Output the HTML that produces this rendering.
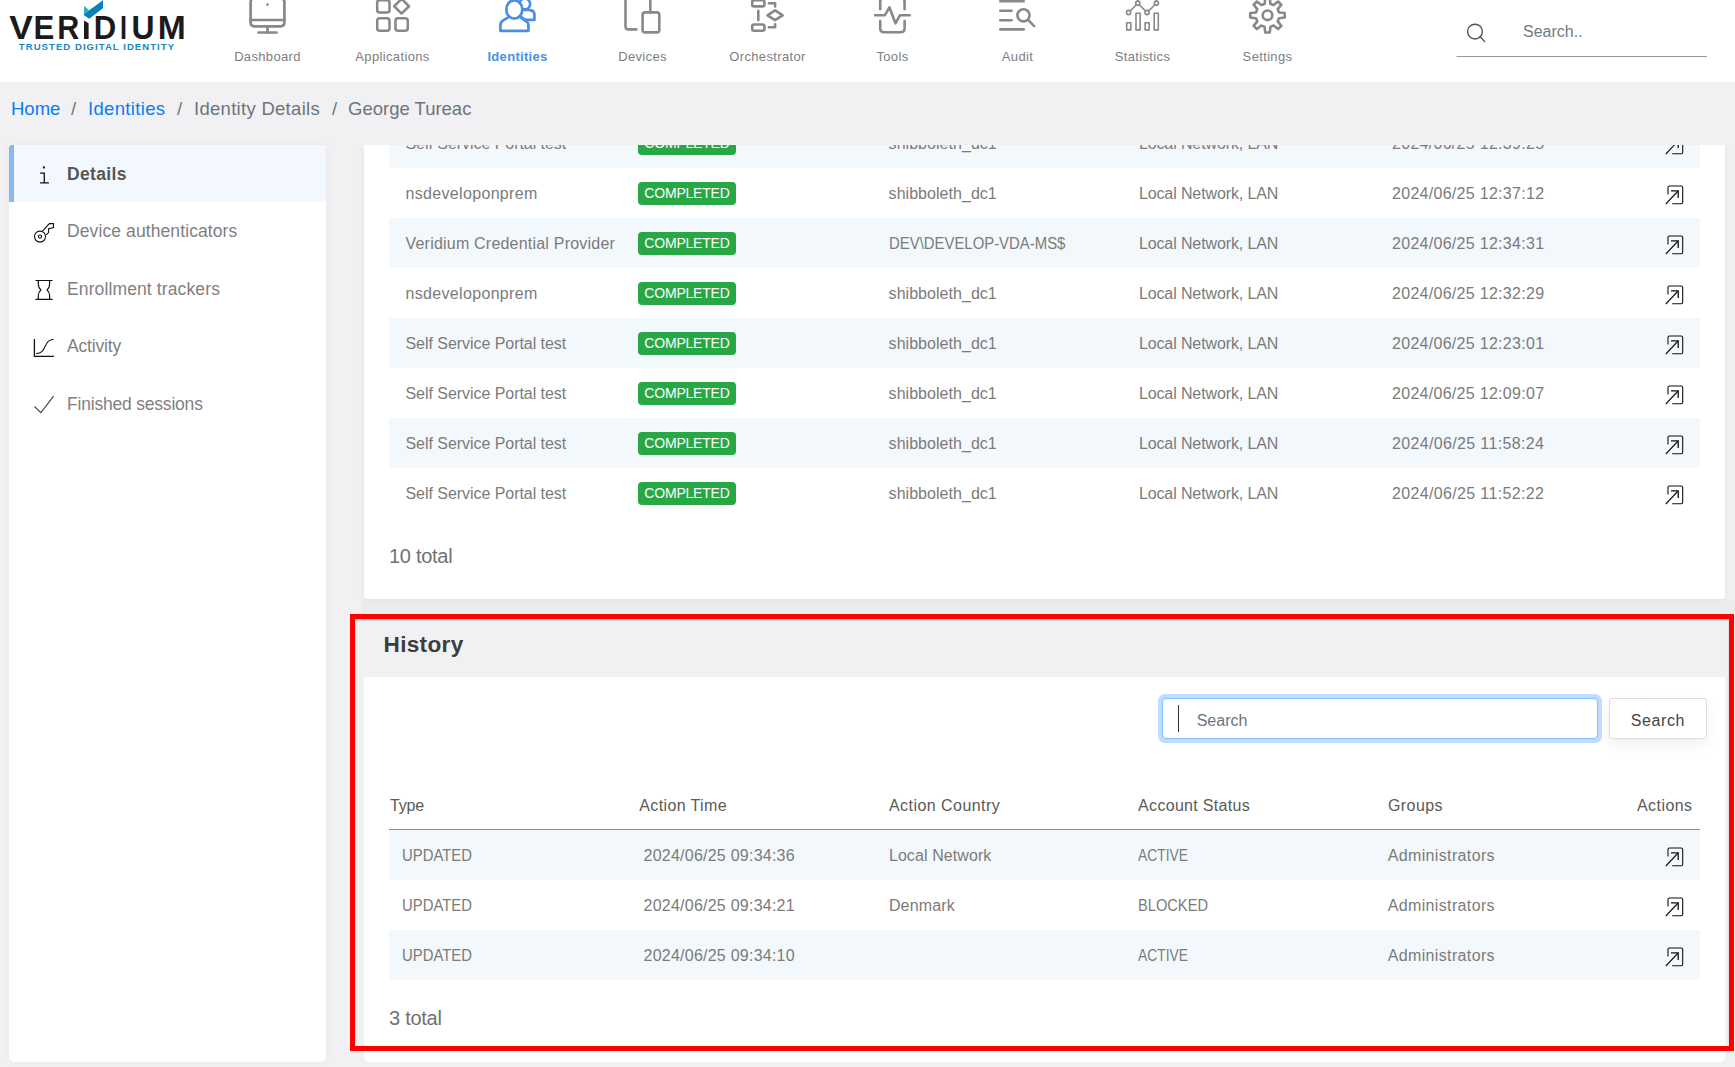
<!DOCTYPE html>
<html><head><meta charset="utf-8">
<style>
*{box-sizing:border-box;margin:0;padding:0}
html,body{width:1735px;height:1067px;overflow:hidden}
body{background:#f1f1f3;font-family:"Liberation Sans",sans-serif;position:relative;color:#707070}
.a{position:absolute;white-space:nowrap;line-height:1}
#hdr{position:absolute;left:0;top:0;width:1735px;height:82px;background:#fff}
.nl{position:absolute;top:50px;width:125px;text-align:center;font-size:13px;color:#7e7e7e;letter-spacing:0.35px;line-height:1}
.nl.act{color:#4a90e2;font-weight:bold;letter-spacing:0.3px}
#side{position:absolute;left:9px;top:145px;width:317px;height:917px;background:#fff;border-radius:0 0 5px 5px;box-shadow:0 0 8px rgba(0,0,0,0.04)}
.si{position:absolute;left:58px;font-size:17.5px;color:#7f7f7f;line-height:1}
#card1{position:absolute;left:364px;top:145px;width:1361px;height:454px;background:#fff;border-radius:0 0 4px 4px;box-shadow:0 1px 7px rgba(0,0,0,0.06)}
#card2{position:absolute;left:364px;top:677px;width:1361px;height:385px;background:#fff;border-radius:0 0 5px 5px}
.stripe{position:absolute;left:389px;width:1311px;height:50px;background:#f3f8fc}
.t{position:absolute;font-size:16px;line-height:1;white-space:nowrap;color:#6e6e6e}
.badge{position:absolute;left:638px;width:98px;height:23px;background:#28a745;border-radius:4px;color:#fff;font-size:14px;line-height:23px;text-align:center;letter-spacing:-0.2px}
.th{position:absolute;top:797.5px;font-size:16px;line-height:1;color:#555;white-space:nowrap}
</style></head><body>

<div id="hdr"></div>

<!-- logo -->
<svg class="a" style="left:0;top:0" width="200" height="60" viewBox="0 0 200 60">
  <g fill="#1c1a1b" font-family="Liberation Sans" font-weight="bold" font-size="34">
    <text x="9.2" y="38.9" textLength="23.5" lengthAdjust="spacingAndGlyphs">V</text>
    <text x="33.6" y="38.9" textLength="20.8" lengthAdjust="spacingAndGlyphs">E</text>
    <text x="57.2" y="38.9" textLength="22" lengthAdjust="spacingAndGlyphs">R</text>
    <text x="93.8" y="38.9" textLength="22.5" lengthAdjust="spacingAndGlyphs">D</text>
    <text x="120" y="38.9" textLength="7" lengthAdjust="spacingAndGlyphs">I</text>
    <text x="131.5" y="38.9" textLength="23" lengthAdjust="spacingAndGlyphs">U</text>
    <text x="157.7" y="38.9" textLength="28" lengthAdjust="spacingAndGlyphs">M</text>
  </g>
  <polygon fill="#1c1a1b" points="84,20.5 88.6,23.3 88.6,38.9 84,38.9"/>
  <polygon fill="#2bb0c4" points="84,5.8 89,10.2 84,14"/>
  <polygon fill="#0b80b9" points="84,14 103,0.3 103,8.2 89.2,18.7 84,15.2"/>
  <text x="18.8" y="49.8" fill="#1787c2" font-family="Liberation Sans" font-weight="bold" font-size="9.6" textLength="155.3" lengthAdjust="spacing">TRUSTED DIGITAL IDENTITY</text>
</svg>

<!-- nav icons -->
<svg class="a" style="left:0;top:0" width="1735" height="82" viewBox="0 0 1735 82" fill="none" stroke-linecap="round" stroke-linejoin="round">
  <g stroke="#888" stroke-width="2.7">
    <!-- dashboard monitor -->
    <path d="M254.4,-1.6 H280.6 Q284.4,-1.6 284.4,2.2 V22.5 Q284.4,26.3 280.6,26.3 H254.4 Q250.6,26.3 250.6,22.5 V2.2 Q250.6,-1.6 254.4,-1.6 Z"/>
    <path d="M250.6,20 H284.4"/>
    <path d="M258.5,32.5 H276.5" />
    <path d="M267.5,26.3 V32.5"/>
  </g>
  <circle cx="267.5" cy="4.6" r="1.3" fill="#888"/>
  <g stroke="#888" stroke-width="2.5">
    <rect x="377.2" y="0.15" width="12.3" height="12.3" rx="2.5"/>
    <rect x="377.2" y="18.35" width="12.3" height="12.3" rx="2.5"/>
    <rect x="395.45" y="18.35" width="12.3" height="12.3" rx="2.5"/>
    <path d="M401.6,-1.2 L409,6.25 L401.6,13.7 L394.2,6.25 Z"/>
  </g>
  <g stroke="#4a90e2" stroke-width="2.7">
    <circle cx="524.8" cy="4" r="5.3" fill="#fff"/>
    <path d="M521.5,17.2 Q523.8,19.9 527,19.9 H534.4 V14.6 Q534.4,11.5 531.2,10.4 Q530,10 528.3,10 H523.2" fill="#fff"/>
    <ellipse cx="514.3" cy="9.5" rx="8" ry="9.2" fill="#fff"/>
    <path d="M507.5,17.8 L503.5,20.2 Q500.4,22 500.4,25.2 V30.8 H528.4 V24.5 Q528.4,22.8 526.5,21.6 L521.2,17.8"/>
  </g>
  <g stroke="#868b8f" stroke-width="2.6">
    <path d="M625.5,-4 V26.5 Q625.5,29.4 628.4,29.4 H636.4"/>
    <rect x="642.6" y="12.4" width="16.7" height="20" rx="2.5"/>
    <path d="M650.3,-4 V12.4"/>
  </g>
  <g stroke="#888" stroke-width="2.6">
    <rect x="752.2" y="0.2" width="12.3" height="6.2" rx="2"/>
    <rect x="752.2" y="24.5" width="12.3" height="6.3" rx="2"/>
    <path d="M758.3,10.8 V20.1"/>
    <path d="M775.1,10.4 L782.7,15.3 L775.1,20.2 L767.5,15.3 Z"/>
    <path d="M768.9,3.2 H775.1 V6.4"/>
    <path d="M775.1,24.2 V27.3 H768.9"/>
  </g>
  <g stroke="#888" stroke-width="2.6">
    <path d="M880.2,9.3 V2 Q880.2,-2 884,-3"/>
    <path d="M904.6,9.3 V2 Q904.6,-2 900.8,-3"/>
    <path d="M880.2,21 V28.3 Q880.2,32.2 884.2,32.2 H900.6 Q904.6,32.2 904.6,28.3 V21"/>
    <path d="M875.1,15.3 H884.8 L889.4,7.3 L895.5,23.4 L899.9,15.3 H909.6"/>
  </g>
  <g stroke="#888" stroke-width="2.6">
    <path d="M1000.3,1.2 H1023.7"/>
    <path d="M1000.3,10.7 H1011.6"/>
    <path d="M1000.3,20.2 H1011.6"/>
    <path d="M1000.3,29.4 H1023.7"/>
    <circle cx="1023.5" cy="15.3" r="6.1"/>
    <path d="M1028.8,20.7 L1034.2,26.1"/>
  </g>
  <g stroke="#888" stroke-width="1.6">
    <rect x="1126.7" y="22.8" width="4.1" height="7.1"/>
    <rect x="1136" y="13.3" width="4.1" height="16.6"/>
    <rect x="1145.1" y="22.8" width="4.1" height="7.1"/>
    <rect x="1154.2" y="13.3" width="4.1" height="16.6"/>
    <circle cx="1128.6" cy="12.5" r="2.1"/>
    <circle cx="1137.8" cy="3.2" r="2.1"/>
    <circle cx="1147.1" cy="12.5" r="2.1"/>
    <circle cx="1156.4" cy="3.2" r="2.1"/>
    <path d="M1130.1,11 L1136.3,4.7 M1139.3,4.7 L1145.6,11 M1148.6,11 L1154.9,4.7 M1137.8,1.1 V-3 M1156.4,1.1 V-3"/>
  </g>
  <g stroke="#888" stroke-width="2.6">
    <path d="M1263.02,4.49 L1264.62,3.75 L1265.23,-1.95 L1269.77,-1.95 L1270.38,3.75 L1271.98,4.49 L1273.63,5.10 L1278.09,1.50 L1281.30,4.71 L1277.70,9.17 L1278.31,10.82 L1279.05,12.42 L1284.75,13.03 L1284.75,17.57 L1279.05,18.18 L1278.31,19.78 L1277.70,21.43 L1281.30,25.89 L1278.09,29.10 L1273.63,25.50 L1271.98,26.11 L1270.38,26.85 L1269.77,32.55 L1265.23,32.55 L1264.62,26.85 L1263.02,26.11 L1261.37,25.50 L1256.91,29.10 L1253.70,25.89 L1257.30,21.43 L1256.69,19.78 L1255.95,18.18 L1250.25,17.57 L1250.25,13.03 L1255.95,12.42 L1256.69,10.82 L1257.30,9.17 L1253.70,4.71 L1256.91,1.50 L1261.37,5.10 Z"/>
    <circle cx="1267.5" cy="15.3" r="4.8"/>
  </g>
  <!-- header search -->
  <g stroke="#555" stroke-width="1.4">
    <circle cx="1475" cy="31.6" r="7.4"/>
    <path d="M1480,36.6 L1484.6,41.4"/>
  </g>
  <path d="M1457,56.5 H1706.5" stroke="#8e9c9c" stroke-width="1.2"/>
</svg>

<div class="nl" style="left:205px">Dashboard</div>
<div class="nl" style="left:330px">Applications</div>
<div class="nl act" style="left:455px">Identities</div>
<div class="nl" style="left:580px">Devices</div>
<div class="nl" style="left:705px">Orchestrator</div>
<div class="nl" style="left:830px">Tools</div>
<div class="nl" style="left:955px">Audit</div>
<div class="nl" style="left:1080px">Statistics</div>
<div class="nl" style="left:1205px">Settings</div>
<div class="a" style="left:1523px;top:24.3px;font-size:16px;color:#6c7a89">Search..</div>

<!-- breadcrumb -->
<div class="a" style="left:11px;top:100.2px;font-size:18.5px;color:#0a7cf0">Home</div>
<div class="a" style="left:71px;top:100.2px;font-size:18.5px;color:#6c757d">/</div>
<div class="a" style="left:88px;top:100.2px;font-size:18.5px;color:#0a7cf0;letter-spacing:0.34px">Identities</div>
<div class="a" style="left:177px;top:100.2px;font-size:18.5px;color:#6c757d">/</div>
<div class="a" style="left:194px;top:100.2px;font-size:18.5px;color:#6c757d;letter-spacing:0.29px">Identity Details</div>
<div class="a" style="left:332px;top:100.2px;font-size:18.5px;color:#6c757d">/</div>
<div class="a" style="left:348px;top:100.2px;font-size:18.5px;color:#6c757d">George Tureac</div>

<!-- sidebar -->
<div id="side">
  <div style="position:absolute;left:0;top:0;width:317px;height:57px;background:#f2f8fd"></div>
  <div style="position:absolute;left:0;top:0;width:5px;height:57px;background:#8ab8eb;border-radius:3px 0 0 0"></div>
</div>
<svg class="a" style="left:0;top:140px" width="70" height="290" viewBox="0 140 70 290" fill="none" stroke="#111" stroke-width="1.1" stroke-linecap="butt" stroke-linejoin="miter">
  <rect x="42.9" y="166.4" width="2" height="2" fill="#111" stroke="none"/>
  <path d="M40.1,173.2 H44.3 V183 M40.1,182.9 H48.9" stroke-width="1.3"/>
  <circle cx="40" cy="236.6" r="5.5"/>
  <circle cx="40" cy="236.6" r="1.6"/>
  <path d="M42.2,231.3 L49.4,223.6 H53.5 V227.6 L48.6,228.6 V232.6 L46,234.9"/>
  <path d="M35.5,280.5 H52.6 M35.5,299.4 H52.6 M38.3,280.5 V284.2 Q38.3,287.5 40.9,289.9 Q38.3,292.5 38.3,295.5 V299.4 M49.6,280.5 V284.2 Q49.6,287.5 47.1,289.9 Q49.6,292.5 49.6,295.5 V299.4" stroke-width="1.2"/>
  <path d="M34.4,339 V356.4 H53.9" stroke-width="1.3"/>
  <path d="M36.2,353.6 C44,353.6 44,347 47,343 C49,340 51,339.5 53.6,339.5"/>
  <path d="M34.4,406.5 L40.9,412.6 L53.6,396.2" stroke="#444"/>
</svg>
<div class="si" style="left:67px;top:165.7px;font-weight:bold;color:#555;letter-spacing:0.35px">Details</div>
<div class="si" style="left:67px;top:223.3px;letter-spacing:0.1px">Device authenticators</div>
<div class="si" style="left:67px;top:280.9px;letter-spacing:0.12px">Enrollment trackers</div>
<div class="si" style="left:67px;top:338.4px;letter-spacing:-0.18px">Activity</div>
<div class="si" style="left:67px;top:396px;letter-spacing:-0.2px">Finished sessions</div>

<!-- card 1 -->
<div style="position:absolute;left:340px;top:145px;width:1395px;height:470px;overflow:hidden"><div id="card1" style="left:24px;top:0"></div></div>
<div style="position:absolute;left:362px;top:599px;width:1373px;height:16px;background:linear-gradient(rgba(0,0,0,0.015),rgba(0,0,0,0.028))"></div>
<div id="card2"></div>
<div id="clip1" style="position:absolute;left:0;top:145px;width:1735px;height:460px;overflow:hidden">
<div style="position:absolute;left:0;top:-145px;width:1735px;height:700px">
<div class="stripe" style="top:118px"></div>
<div class="a" style="left:405.5px;top:135.66px;font-size:16px;color:#7b7b7b;letter-spacing:-0.05px;">Self Service Portal test</div>
<div class="badge" style="top:132px">COMPLETED</div>
<div class="a" style="left:888.6px;top:135.66px;font-size:16px;color:#7b7b7b;letter-spacing:0.04px;">shibboleth_dc1</div>
<div class="a" style="left:1138.9px;top:135.66px;font-size:16px;color:#7b7b7b;letter-spacing:-0.11px;">Local Network, LAN</div>
<div class="a" style="left:1392px;top:135.66px;font-size:16px;color:#7b7b7b;letter-spacing:0.29px;">2024/06/25 12:39:25</div>
<svg class="a" style="left:1664.7px;top:132.5px" width="26" height="26" viewBox="1664.7 132.5 26 26" fill="none" stroke="#111" stroke-width="1.1"><path d="M1667.7,143.9 V137.0 Q1667.7,135.5 1669.2,135.5 H1680.9 Q1682.4,135.5 1682.4,137.0 V151.8 Q1682.4,153.3 1680.9,153.3 H1671.9"/><path d="M1665.5,153.5 L1677.8,140.5"/><path d="M1670.7,140.3 H1677.9 V147.5" stroke-width="1.3"/></svg>
<div class="a" style="left:405.5px;top:185.66px;font-size:16px;color:#7b7b7b;letter-spacing:0.33px;">nsdeveloponprem</div>
<div class="badge" style="top:182px">COMPLETED</div>
<div class="a" style="left:888.6px;top:185.66px;font-size:16px;color:#7b7b7b;letter-spacing:0.04px;">shibboleth_dc1</div>
<div class="a" style="left:1138.9px;top:185.66px;font-size:16px;color:#7b7b7b;letter-spacing:-0.11px;">Local Network, LAN</div>
<div class="a" style="left:1392px;top:185.66px;font-size:16px;color:#7b7b7b;letter-spacing:0.29px;">2024/06/25 12:37:12</div>
<svg class="a" style="left:1664.7px;top:182.5px" width="26" height="26" viewBox="1664.7 182.5 26 26" fill="none" stroke="#111" stroke-width="1.1"><path d="M1667.7,193.9 V187.0 Q1667.7,185.5 1669.2,185.5 H1680.9 Q1682.4,185.5 1682.4,187.0 V201.8 Q1682.4,203.3 1680.9,203.3 H1671.9"/><path d="M1665.5,203.5 L1677.8,190.5"/><path d="M1670.7,190.3 H1677.9 V197.5" stroke-width="1.3"/></svg>
<div class="stripe" style="top:218px"></div>
<div class="a" style="left:405.5px;top:235.66px;font-size:16px;color:#7b7b7b;letter-spacing:0.21px;">Veridium Credential Provider</div>
<div class="badge" style="top:232px">COMPLETED</div>
<div class="a" style="left:888.6px;top:235.66px;font-size:16px;color:#7b7b7b;transform:scaleX(0.9312);transform-origin:0 0;">DEV\DEVELOP-VDA-MS$</div>
<div class="a" style="left:1138.9px;top:235.66px;font-size:16px;color:#7b7b7b;letter-spacing:-0.11px;">Local Network, LAN</div>
<div class="a" style="left:1392px;top:235.66px;font-size:16px;color:#7b7b7b;letter-spacing:0.29px;">2024/06/25 12:34:31</div>
<svg class="a" style="left:1664.7px;top:232.5px" width="26" height="26" viewBox="1664.7 232.5 26 26" fill="none" stroke="#111" stroke-width="1.1"><path d="M1667.7,243.9 V237.0 Q1667.7,235.5 1669.2,235.5 H1680.9 Q1682.4,235.5 1682.4,237.0 V251.8 Q1682.4,253.3 1680.9,253.3 H1671.9"/><path d="M1665.5,253.5 L1677.8,240.5"/><path d="M1670.7,240.3 H1677.9 V247.5" stroke-width="1.3"/></svg>
<div class="a" style="left:405.5px;top:285.66px;font-size:16px;color:#7b7b7b;letter-spacing:0.33px;">nsdeveloponprem</div>
<div class="badge" style="top:282px">COMPLETED</div>
<div class="a" style="left:888.6px;top:285.66px;font-size:16px;color:#7b7b7b;letter-spacing:0.04px;">shibboleth_dc1</div>
<div class="a" style="left:1138.9px;top:285.66px;font-size:16px;color:#7b7b7b;letter-spacing:-0.11px;">Local Network, LAN</div>
<div class="a" style="left:1392px;top:285.66px;font-size:16px;color:#7b7b7b;letter-spacing:0.29px;">2024/06/25 12:32:29</div>
<svg class="a" style="left:1664.7px;top:282.5px" width="26" height="26" viewBox="1664.7 282.5 26 26" fill="none" stroke="#111" stroke-width="1.1"><path d="M1667.7,293.9 V287.0 Q1667.7,285.5 1669.2,285.5 H1680.9 Q1682.4,285.5 1682.4,287.0 V301.8 Q1682.4,303.3 1680.9,303.3 H1671.9"/><path d="M1665.5,303.5 L1677.8,290.5"/><path d="M1670.7,290.3 H1677.9 V297.5" stroke-width="1.3"/></svg>
<div class="stripe" style="top:318px"></div>
<div class="a" style="left:405.5px;top:335.66px;font-size:16px;color:#7b7b7b;letter-spacing:-0.05px;">Self Service Portal test</div>
<div class="badge" style="top:332px">COMPLETED</div>
<div class="a" style="left:888.6px;top:335.66px;font-size:16px;color:#7b7b7b;letter-spacing:0.04px;">shibboleth_dc1</div>
<div class="a" style="left:1138.9px;top:335.66px;font-size:16px;color:#7b7b7b;letter-spacing:-0.11px;">Local Network, LAN</div>
<div class="a" style="left:1392px;top:335.66px;font-size:16px;color:#7b7b7b;letter-spacing:0.29px;">2024/06/25 12:23:01</div>
<svg class="a" style="left:1664.7px;top:332.5px" width="26" height="26" viewBox="1664.7 332.5 26 26" fill="none" stroke="#111" stroke-width="1.1"><path d="M1667.7,343.9 V337.0 Q1667.7,335.5 1669.2,335.5 H1680.9 Q1682.4,335.5 1682.4,337.0 V351.8 Q1682.4,353.3 1680.9,353.3 H1671.9"/><path d="M1665.5,353.5 L1677.8,340.5"/><path d="M1670.7,340.3 H1677.9 V347.5" stroke-width="1.3"/></svg>
<div class="a" style="left:405.5px;top:385.66px;font-size:16px;color:#7b7b7b;letter-spacing:-0.05px;">Self Service Portal test</div>
<div class="badge" style="top:382px">COMPLETED</div>
<div class="a" style="left:888.6px;top:385.66px;font-size:16px;color:#7b7b7b;letter-spacing:0.04px;">shibboleth_dc1</div>
<div class="a" style="left:1138.9px;top:385.66px;font-size:16px;color:#7b7b7b;letter-spacing:-0.11px;">Local Network, LAN</div>
<div class="a" style="left:1392px;top:385.66px;font-size:16px;color:#7b7b7b;letter-spacing:0.29px;">2024/06/25 12:09:07</div>
<svg class="a" style="left:1664.7px;top:382.5px" width="26" height="26" viewBox="1664.7 382.5 26 26" fill="none" stroke="#111" stroke-width="1.1"><path d="M1667.7,393.9 V387.0 Q1667.7,385.5 1669.2,385.5 H1680.9 Q1682.4,385.5 1682.4,387.0 V401.8 Q1682.4,403.3 1680.9,403.3 H1671.9"/><path d="M1665.5,403.5 L1677.8,390.5"/><path d="M1670.7,390.3 H1677.9 V397.5" stroke-width="1.3"/></svg>
<div class="stripe" style="top:418px"></div>
<div class="a" style="left:405.5px;top:435.66px;font-size:16px;color:#7b7b7b;letter-spacing:-0.05px;">Self Service Portal test</div>
<div class="badge" style="top:432px">COMPLETED</div>
<div class="a" style="left:888.6px;top:435.66px;font-size:16px;color:#7b7b7b;letter-spacing:0.04px;">shibboleth_dc1</div>
<div class="a" style="left:1138.9px;top:435.66px;font-size:16px;color:#7b7b7b;letter-spacing:-0.11px;">Local Network, LAN</div>
<div class="a" style="left:1392px;top:435.66px;font-size:16px;color:#7b7b7b;letter-spacing:0.35px;">2024/06/25 11:58:24</div>
<svg class="a" style="left:1664.7px;top:432.5px" width="26" height="26" viewBox="1664.7 432.5 26 26" fill="none" stroke="#111" stroke-width="1.1"><path d="M1667.7,443.9 V437.0 Q1667.7,435.5 1669.2,435.5 H1680.9 Q1682.4,435.5 1682.4,437.0 V451.8 Q1682.4,453.3 1680.9,453.3 H1671.9"/><path d="M1665.5,453.5 L1677.8,440.5"/><path d="M1670.7,440.3 H1677.9 V447.5" stroke-width="1.3"/></svg>
<div class="a" style="left:405.5px;top:485.66px;font-size:16px;color:#7b7b7b;letter-spacing:-0.05px;">Self Service Portal test</div>
<div class="badge" style="top:482px">COMPLETED</div>
<div class="a" style="left:888.6px;top:485.66px;font-size:16px;color:#7b7b7b;letter-spacing:0.04px;">shibboleth_dc1</div>
<div class="a" style="left:1138.9px;top:485.66px;font-size:16px;color:#7b7b7b;letter-spacing:-0.11px;">Local Network, LAN</div>
<div class="a" style="left:1392px;top:485.66px;font-size:16px;color:#7b7b7b;letter-spacing:0.35px;">2024/06/25 11:52:22</div>
<svg class="a" style="left:1664.7px;top:482.5px" width="26" height="26" viewBox="1664.7 482.5 26 26" fill="none" stroke="#111" stroke-width="1.1"><path d="M1667.7,493.9 V487.0 Q1667.7,485.5 1669.2,485.5 H1680.9 Q1682.4,485.5 1682.4,487.0 V501.8 Q1682.4,503.3 1680.9,503.3 H1671.9"/><path d="M1665.5,503.5 L1677.8,490.5"/><path d="M1670.7,490.3 H1677.9 V497.5" stroke-width="1.3"/></svg>
<div class="a" style="left:389px;top:546.37px;font-size:20px;color:#717171;letter-spacing:-0.29px;">10 total</div>
</div></div>
<div class="a" style="left:383.5px;top:633.67px;font-size:22.6px;color:#3d3d3d;font-weight:bold;letter-spacing:0.31px;">History</div>
<div class="a" style="left:390px;top:797.66px;font-size:16px;color:#5a5a5a;letter-spacing:-0.18px;">Type</div>
<div class="a" style="left:639.2px;top:797.66px;font-size:16px;color:#5a5a5a;letter-spacing:0.39px;">Action Time</div>
<div class="a" style="left:888.9px;top:797.66px;font-size:16px;color:#5a5a5a;letter-spacing:0.46px;">Action Country</div>
<div class="a" style="left:1138.1px;top:797.66px;font-size:16px;color:#5a5a5a;letter-spacing:0.31px;">Account Status</div>
<div class="a" style="left:1388px;top:797.66px;font-size:16px;color:#5a5a5a;letter-spacing:0.42px;">Groups</div>
<div class="a" style="left:1637px;top:797.66px;font-size:16px;color:#5a5a5a;letter-spacing:0.43px;">Actions</div>
<div style="position:absolute;left:389px;top:829px;width:1311px;height:1px;background:#8d8d8d"></div>
<div class="stripe" style="top:830px"></div>
<div class="a" style="left:402.1px;top:848.46px;font-size:16px;color:#7b7b7b;transform:scaleX(0.9297);transform-origin:0 0;">UPDATED</div>
<div class="a" style="left:643.5px;top:848.46px;font-size:16px;color:#7b7b7b;letter-spacing:0.24px;">2024/06/25 09:34:36</div>
<div class="a" style="left:888.9px;top:848.46px;font-size:16px;color:#7b7b7b;letter-spacing:0.09px;">Local Network</div>
<div class="a" style="left:1138.1px;top:848.46px;font-size:16px;color:#7b7b7b;transform:scaleX(0.8649);transform-origin:0 0;">ACTIVE</div>
<div class="a" style="left:1387.7px;top:848.46px;font-size:16px;color:#7b7b7b;letter-spacing:0.36px;">Administrators</div>
<svg class="a" style="left:1664.7px;top:844.5px" width="26" height="26" viewBox="1664.7 844.5 26 26" fill="none" stroke="#111" stroke-width="1.1"><path d="M1667.7,855.9 V849.0 Q1667.7,847.5 1669.2,847.5 H1680.9 Q1682.4,847.5 1682.4,849.0 V863.8 Q1682.4,865.3 1680.9,865.3 H1671.9"/><path d="M1665.5,865.5 L1677.8,852.5"/><path d="M1670.7,852.3 H1677.9 V859.5" stroke-width="1.3"/></svg>
<div class="a" style="left:402.1px;top:898.46px;font-size:16px;color:#7b7b7b;transform:scaleX(0.9297);transform-origin:0 0;">UPDATED</div>
<div class="a" style="left:643.5px;top:898.46px;font-size:16px;color:#7b7b7b;letter-spacing:0.24px;">2024/06/25 09:34:21</div>
<div class="a" style="left:888.9px;top:898.46px;font-size:16px;color:#7b7b7b;letter-spacing:0.15px;">Denmark</div>
<div class="a" style="left:1138.1px;top:898.46px;font-size:16px;color:#7b7b7b;transform:scaleX(0.9150);transform-origin:0 0;">BLOCKED</div>
<div class="a" style="left:1387.7px;top:898.46px;font-size:16px;color:#7b7b7b;letter-spacing:0.36px;">Administrators</div>
<svg class="a" style="left:1664.7px;top:894.5px" width="26" height="26" viewBox="1664.7 894.5 26 26" fill="none" stroke="#111" stroke-width="1.1"><path d="M1667.7,905.9 V899.0 Q1667.7,897.5 1669.2,897.5 H1680.9 Q1682.4,897.5 1682.4,899.0 V913.8 Q1682.4,915.3 1680.9,915.3 H1671.9"/><path d="M1665.5,915.5 L1677.8,902.5"/><path d="M1670.7,902.3 H1677.9 V909.5" stroke-width="1.3"/></svg>
<div class="stripe" style="top:930px"></div>
<div class="a" style="left:402.1px;top:948.46px;font-size:16px;color:#7b7b7b;transform:scaleX(0.9297);transform-origin:0 0;">UPDATED</div>
<div class="a" style="left:643.5px;top:948.46px;font-size:16px;color:#7b7b7b;letter-spacing:0.24px;">2024/06/25 09:34:10</div>
<div class="a" style="left:1138.1px;top:948.46px;font-size:16px;color:#7b7b7b;transform:scaleX(0.8649);transform-origin:0 0;">ACTIVE</div>
<div class="a" style="left:1387.7px;top:948.46px;font-size:16px;color:#7b7b7b;letter-spacing:0.36px;">Administrators</div>
<svg class="a" style="left:1664.7px;top:944.5px" width="26" height="26" viewBox="1664.7 944.5 26 26" fill="none" stroke="#111" stroke-width="1.1"><path d="M1667.7,955.9 V949.0 Q1667.7,947.5 1669.2,947.5 H1680.9 Q1682.4,947.5 1682.4,949.0 V963.8 Q1682.4,965.3 1680.9,965.3 H1671.9"/><path d="M1665.5,965.5 L1677.8,952.5"/><path d="M1670.7,952.3 H1677.9 V959.5" stroke-width="1.3"/></svg>
<div class="a" style="left:389px;top:1007.77px;font-size:20px;color:#717171;letter-spacing:-0.26px;">3 total</div>
<!-- history search -->
<div style="position:absolute;left:1158px;top:694px;width:444px;height:49px;border-radius:7px;background:#bfdeff"></div>
<div style="position:absolute;left:1162px;top:698px;width:436px;height:41px;border-radius:4px;background:#fff;border:1px solid #80bdff"></div>
<div style="position:absolute;left:1178px;top:705px;width:1px;height:27px;background:#333"></div>
<div class="a" style="left:1196.7px;top:713px;font-size:16px;color:#6c757d">Search</div>
<div style="position:absolute;left:1609px;top:698px;width:98px;height:41px;border-radius:3px;background:#fff;border:1px solid #dcdcdc;box-shadow:0 6px 14px rgba(0,0,0,0.06)"></div>
<div class="a" style="left:1630.7px;top:713px;font-size:16px;color:#444;letter-spacing:0.6px">Search</div>
<!-- red highlight -->
<div style="position:absolute;left:350px;top:614px;width:1384px;height:437px;border:5.5px solid #ff0000;box-shadow:inset 0 1px 2px rgba(0,0,0,0.25)"></div>
</body></html>
